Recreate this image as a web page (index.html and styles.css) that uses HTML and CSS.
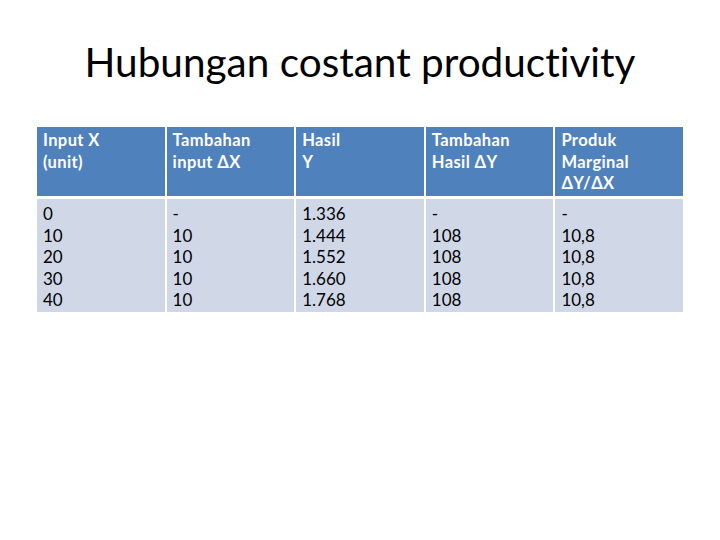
FILE: index.html
```html
<!DOCTYPE html>
<html>
<head>
<meta charset="utf-8">
<link rel="stylesheet" href="styles.css">
</head>
<body>
<div class="slide">
  <h1 class="title">Hubungan costant productivity</h1>
  <div class="table">
    <div class="cell head">Input X<br>(unit)</div>
    <div class="cell head">Tambahan<br>input ΔX</div>
    <div class="cell head">Hasil<br>Y</div>
    <div class="cell head">Tambahan<br>Hasil ΔY</div>
    <div class="cell head">Produk<br>Marginal<br>ΔY/ΔX</div>
    <div class="cell body">0<br>10<br>20<br>30<br>40</div>
    <div class="cell body">-<br>10<br>10<br>10<br>10</div>
    <div class="cell body">1.336<br>1.444<br>1.552<br>1.660<br>1.768</div>
    <div class="cell body">-<br>108<br>108<br>108<br>108</div>
    <div class="cell body">-<br>10,8<br>10,8<br>10,8<br>10,8</div>
  </div>
</div>
</body>
</html>
```
FILE: styles.css
```css
html, body {
  margin: 0;
  padding: 0;
  background: #ffffff;
}
.slide {
  width: 720px;
  height: 540px;
  padding-top: 38px;
  box-sizing: border-box;
  font-family: Lato, "Open Sans", sans-serif;
  font-variant-ligatures: none;
}
.title {
  margin: 0;
  font-weight: normal;
  font-size: 40.5px;
  line-height: 48px;
  text-align: center;
  color: #000000;
}
.table {
  margin: 41px 0 0 37px;
  width: 646px;
  display: grid;
  grid-template-columns: repeat(5, 1fr);
  grid-template-rows: 69px 113px;
  column-gap: 2px;
  row-gap: 3px;
}
.cell {
  box-sizing: border-box;
  padding: 3px 6px 0 6px;
  line-height: 21.5px;
}
.head {
  background: #4f81bd;
  color: #ffffff;
  font-weight: bold;
  font-size: 16.5px;
  letter-spacing: 0.4px;
}
.body {
  background: #d0d8e8;
  color: #000000;
  font-size: 17px;
  padding-top: 4px;
}
```
